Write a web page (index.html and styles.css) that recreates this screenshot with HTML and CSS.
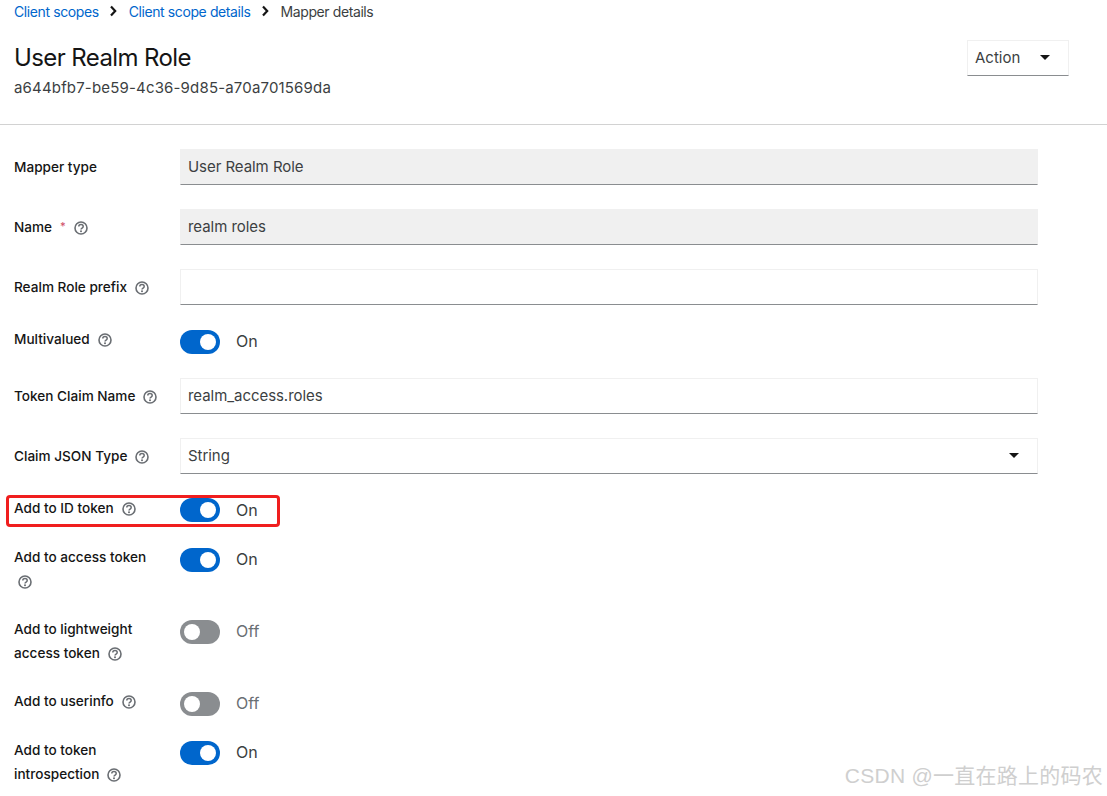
FILE: index.html
```html
<!DOCTYPE html>
<html lang="en">
<head>
<meta charset="utf-8">
<title>Mapper details</title>
<link rel="stylesheet" href="styles.css">
</head>
<body>
<svg class="defs" width="0" height="0" aria-hidden="true">
  <symbol id="help" viewBox="0 0 14 14">
    <circle cx="7" cy="7" r="6" fill="none" stroke="currentColor" stroke-width="1.6"/>
    <path d="M4.8 5.6c0-1.3 1-2 2.2-2s2.2 .7 2.2 1.9c0 1.6-2.2 1.5-2.2 3" fill="none" stroke="currentColor" stroke-width="1.5"/>
    <circle cx="7" cy="10.3" r="1" fill="currentColor"/>
  </symbol>
</svg>
<nav class="crumbs">
  <a class="crumb-link">Client scopes</a>
  <svg class="crumb-sep" viewBox="0 0 8 12"><path d="M2 1.5 6.2 6 2 10.5" fill="none" stroke="currentColor" stroke-width="2.2"/></svg>
  <a class="crumb-link">Client scope details</a>
  <svg class="crumb-sep" viewBox="0 0 8 12"><path d="M2 1.5 6.2 6 2 10.5" fill="none" stroke="currentColor" stroke-width="2.2"/></svg>
  <span>Mapper details</span>
</nav>
<header class="head">
  <div>
    <h1 class="title">User Realm Role</h1>
    <p class="subtitle">a644bfb7-be59-4c36-9d85-a70a701569da</p>
  </div>
  <button class="action" type="button">Action<span class="caret"></span></button>
</header>
<form class="form">
  <div class="row">
    <div class="label center">Mapper type</div>
    <div class="field readonly">User Realm Role</div>
  </div>
  <div class="row">
    <div class="label center">Name<span class="req">*</span><svg class="help"><use href="#help"/></svg></div>
    <div class="field readonly">realm roles</div>
  </div>
  <div class="row">
    <div class="label center">Realm Role prefix<svg class="help"><use href="#help"/></svg></div>
    <div class="field"></div>
  </div>
  <div class="row lowered">
    <div class="label">Multivalued<svg class="help"><use href="#help"/></svg></div>
    <div class="switch"><span class="track on"><span class="knob"></span></span><span class="state">On</span></div>
  </div>
  <div class="row">
    <div class="label center">Token Claim Name<svg class="help"><use href="#help"/></svg></div>
    <div class="field">realm_access.roles</div>
  </div>
  <div class="row">
    <div class="label center">Claim JSON Type<svg class="help"><use href="#help"/></svg></div>
    <div class="field select">String<span class="caret"></span></div>
  </div>
  <div class="row tall">
    <div class="label nudged">Add to ID token<svg class="help"><use href="#help"/></svg></div>
    <div class="switch"><span class="track on"><span class="knob"></span></span><span class="state">On</span></div>
  </div>
  <div class="row">
    <div class="label">Add to access token<br><svg class="help first"><use href="#help"/></svg></div>
    <div class="switch"><span class="track on"><span class="knob"></span></span><span class="state">On</span></div>
  </div>
  <div class="row">
    <div class="label">Add to lightweight<br>access token<svg class="help"><use href="#help"/></svg></div>
    <div class="switch"><span class="track"><span class="knob"></span></span><span class="state off">Off</span></div>
  </div>
  <div class="row">
    <div class="label">Add to userinfo<svg class="help"><use href="#help"/></svg></div>
    <div class="switch"><span class="track"><span class="knob"></span></span><span class="state off">Off</span></div>
  </div>
  <div class="row">
    <div class="label">Add to token<br>introspection<svg class="help"><use href="#help"/></svg></div>
    <div class="switch"><span class="track on"><span class="knob"></span></span><span class="state">On</span></div>
  </div>
</form>
<div class="highlight"></div>
<div class="watermark">CSDN @一直在路上的码农</div>
</body>
</html>
```
FILE: styles.css
```css
* { box-sizing: border-box; }
html, body { height: 796px; overflow: hidden; }
body {
  margin: 0;
  position: relative;
  background: #fff;
  color: #151515;
  font-family: Inter, "Liberation Sans", sans-serif;
  font-size: 16px;
}
.defs { position: absolute; }
.crumbs {
  display: flex;
  align-items: center;
  height: 24px;
  padding: 0 0 2px 14px;
  font-size: 14px;
  letter-spacing: -0.4px;
  color: #3c3f42;
}
.crumb-link { color: #06c; }
.crumb-sep { width: 8px; height: 12px; margin: 0 12px 0 10px; color: #151515; }
.head {
  display: flex;
  justify-content: space-between;
  align-items: flex-start;
  height: 101px;
  padding: 16px 38px 0 14px;
  border-bottom: 1px solid #d2d2d2;
}
.title {
  margin: 1px 0 0;
  font-size: 24px;
  line-height: 34px;
  font-weight: 400;
  letter-spacing: -0.6px;
}
.subtitle {
  margin: 1px 0 0;
  font-size: 15px;
  line-height: 24px;
  letter-spacing: 0.17px;
  color: #3c3f42;
}
.action {
  display: flex;
  align-items: center;
  justify-content: space-between;
  width: 102px;
  height: 36px;
  padding: 0 18px 2px 7px;
  border: 1px solid #f0f0f0;
  border-bottom-color: #8a8d90;
  background: #fff;
  color: #3c3f42;
  font: inherit;
  font-size: 15px;
}
.caret {
  width: 0;
  height: 0;
  border-left: 5.5px solid transparent;
  border-right: 5.5px solid transparent;
  border-top: 5.5px solid #151515;
}
.form {
  display: flex;
  flex-direction: column;
  gap: 24px;
  width: 1038px;
  padding: 24px 0 0 14px;
}
.row {
  display: grid;
  grid-template-columns: 166px 1fr;
  min-height: 25px;
}
.row.lowered { margin-top: 1px; min-height: 24px; }
.row.tall { min-height: 26px; }
.label {
  margin: -3px 0 3px;
  font-size: 13.6px;
  line-height: 24px;
  font-weight: 500;
  color: #151515;
}
.label.center { margin: 0; align-self: center; }
.label.nudged { margin: -2px 0 2px; }
.req { margin-left: 8px; color: #d0506a; font-size: 11px; position: relative; top: -2px; }
.help { width: 14px; height: 14px; margin-left: 8px; vertical-align: -3px; color: #6a6e73; }
.help.first { margin-left: 4px; }
.field {
  display: flex;
  align-items: center;
  height: 36px;
  padding: 0 7px 2px;
  border: 1px solid #f0f0f0;
  border-bottom-color: #8a8d90;
  font-size: 15px;
  letter-spacing: -0.05px;
  color: #3c3f42;
}
.readonly { background: #f0f0f0; }
.select { justify-content: space-between; padding-right: 18px; }
.switch { display: flex; align-items: flex-start; }
.track {
  display: flex;
  align-items: center;
  width: 40px;
  height: 24px;
  padding: 0 4px;
  border-radius: 12px;
  background: #8a8d90;
}
.track.on { justify-content: flex-end; background: #06c; }
.knob { width: 16px; height: 16px; border-radius: 50%; background: #fff; }
.state { margin-left: 16px; line-height: 22px; color: #3c3f42; }
.tall .state { line-height: 24px; }
.state.off { color: #6a6e73; }
.highlight {
  position: absolute;
  left: 6px;
  top: 495px;
  width: 274px;
  height: 32px;
  border: 3px solid #f01e1e;
  border-radius: 4px;
}
.watermark {
  position: absolute;
  right: 4px;
  top: 762px;
  font-family: "Liberation Sans", "Noto Sans CJK SC", sans-serif;
  font-size: 21px;
  letter-spacing: 0.25px;
  line-height: 28px;
  color: #cfcfcf;
}
```
